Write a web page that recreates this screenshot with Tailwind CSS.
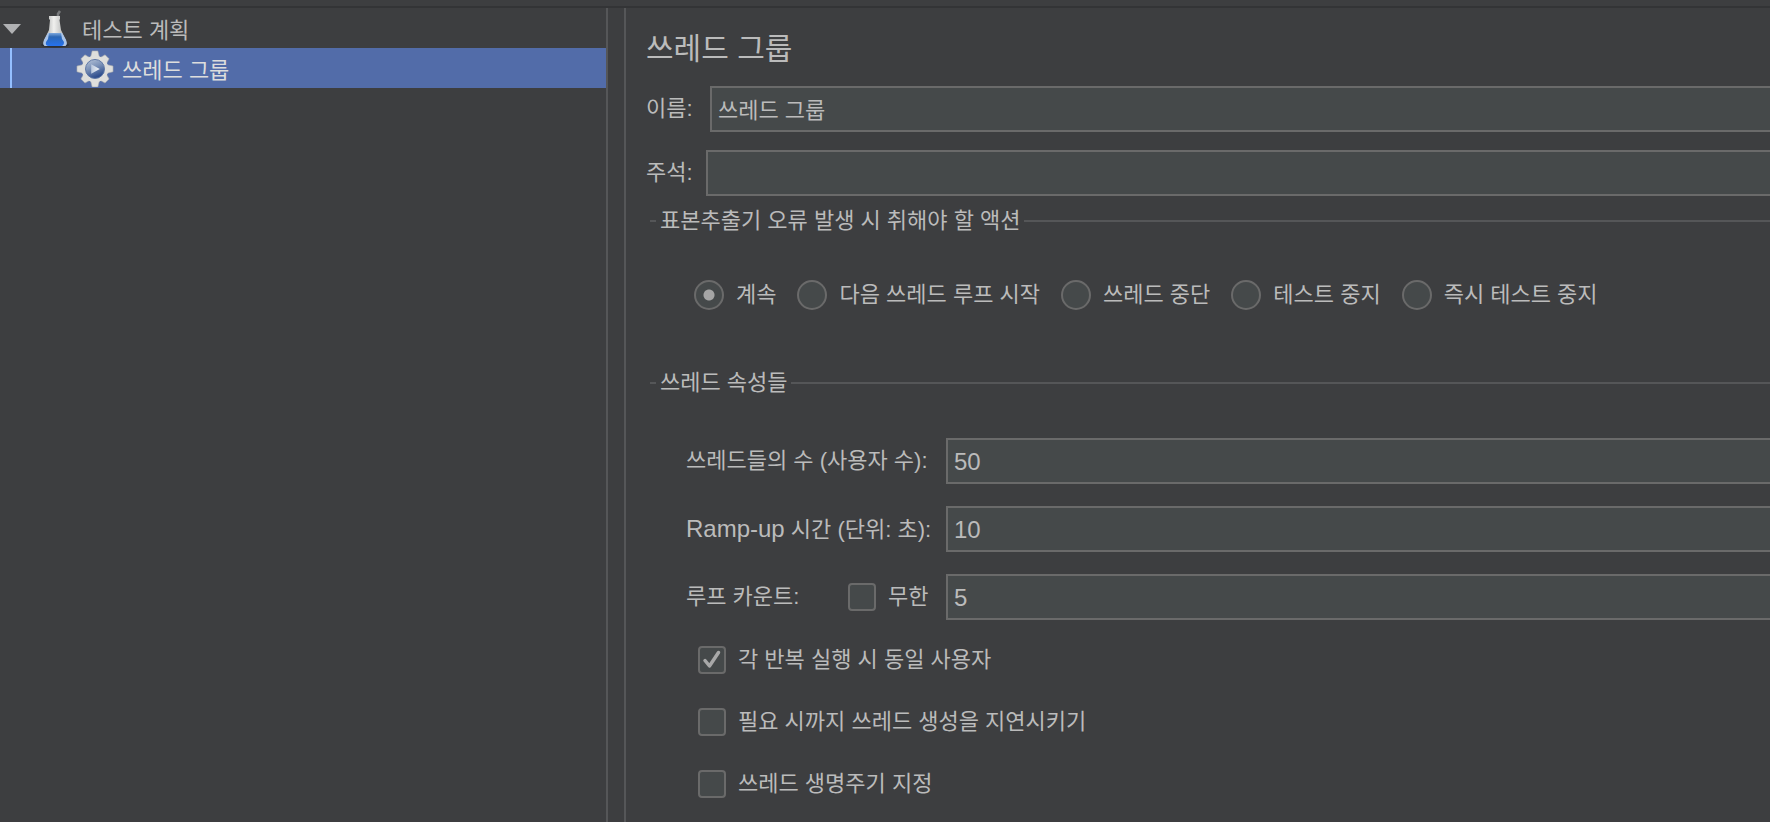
<!DOCTYPE html>
<html lang="ko">
<head>
    <meta charset="UTF-8">
    <meta name="viewport" content="width=device-width, initial-scale=1.0">
    <title>쓰레드 그룹</title>
    <script src="https://cdn.jsdelivr.net/npm/@tailwindcss/browser@4"></script>
</head>
<body class="flex flex-col min-h-screen overflow-x-hidden bg-[#3d3e40] text-[#bbbbbb] text-[22px] leading-8 font-['Liberation_Sans','Noto_Sans_CJK_KR',sans-serif]">
    <!-- Toolbar edge -->
    <header class="h-2 border-b-2 border-[#333436]"></header>

    <div class="flex-grow flex">
        <!-- Test plan tree -->
        <aside class="w-[608px] shrink-0 border-r-2 border-[#555658] font-['Noto_Sans_CJK_KR',sans-serif]">
            <ul>
                <li>
                    <div class="flex items-center h-10 pl-[3px]">
                        <svg class="w-[18px] h-3" viewBox="0 0 18 12"><path d="M0 2H18L9 12Z" fill="#b0b1b3"/></svg>
                        <svg class="w-7 h-10 ml-5" viewBox="0 0 28 40">
                            <defs>
                                <linearGradient id="glass" x1="0" x2="1" y1="0" y2="0">
                                    <stop offset="0" stop-color="#9c9f9f"/>
                                    <stop offset=".45" stop-color="#f0f0ee"/>
                                    <stop offset="1" stop-color="#a4a6a6"/>
                                </linearGradient>
                                <linearGradient id="liquid" x1="0" x2="0" y1="0" y2="1">
                                    <stop offset="0" stop-color="#7fa9dd"/>
                                    <stop offset=".3" stop-color="#2c67b4"/>
                                    <stop offset="1" stop-color="#2672ee"/>
                                </linearGradient>
                            </defs>
                            <ellipse cx="14" cy="37" rx="14" ry="2.500" fill="#2b2f38"/>
                            <path d="M17 10V6L19 3" fill="none" stroke="#77797b" stroke-width="2.500"/>
                            <path d="M8 8H19V11L18.500 12L20 22L25 32Q27 38 23 38H5Q1 38 3 32L8 22L9 12L8 11Z" fill="url(#glass)"/>
                            <path d="M7 25H21L25 32Q27 38 23 38H5Q1 38 3 32Z" fill="#a9c4ea"/>
                            <path d="M8 25H20L21 31L23 34Q23 38 20 38H8Q4 38 5 34L7 31Z" fill="url(#liquid)"/>
                        </svg>
                        <span class="ml-[13px]">테스트 계획</span>
                    </div>
                    <ul>
                        <li class="flex items-center h-10 bg-[#526ca9] text-[#dddddd]">
                            <span class="w-[2px] h-10 ml-[10px] bg-[#94bfff]"></span>
                            <svg class="w-[38px] h-[38px] ml-16" viewBox="-1 -2 40 40">
                                <defs>
                                    <linearGradient id="lens" x1="0" x2=".4" y1="0" y2="1">
                                        <stop offset="0" stop-color="#b9c6da"/>
                                        <stop offset=".5" stop-color="#7c92b8"/>
                                        <stop offset="1" stop-color="#2d4c8c"/>
                                    </linearGradient>
                                    <linearGradient id="play" x1="0" x2="1" y1="0" y2="0">
                                        <stop offset="0" stop-color="#b8c6dc"/>
                                        <stop offset="1" stop-color="#f4f6f8"/>
                                    </linearGradient>
                                </defs>
                                <g fill="#dededc" stroke="#a3a6aa" stroke-width=".6">
                                    <path d="M16 0H22L24 8V30L22 38H16L14 30V8Z"/>
                                    <path d="M16 1H22L24 8V30L22 37H16L14 30V8Z" transform="rotate(45 19 19)"/>
                                    <path d="M16 0H22L24 8V30L22 38H16L14 30V8Z" transform="rotate(90 19 19)"/>
                                    <path d="M16 1H22L24 8V30L22 37H16L14 30V8Z" transform="rotate(135 19 19)"/>
                                </g>
                                <circle cx="19" cy="19" r="14" fill="#dededc"/>
                                <circle cx="19" cy="19" r="10" fill="url(#lens)" stroke="#5b74a3" stroke-width="1"/>
                                <path d="M15 14L24 19L15 24Z" fill="url(#play)"/>
                            </svg>
                            <span class="ml-2">쓰레드 그룹</span>
                        </li>
                    </ul>
                </li>
            </ul>
        </aside>

        <!-- Thread group settings -->
        <main class="flex-grow ml-4 border-l-2 border-[#555658] pl-5">
            <h1 class="pt-[21px] text-[30px] leading-10">쓰레드 그룹</h1>

            <div class="flex items-center mt-[17px]">
                <label for="name" class="w-16">이름:</label>
                <input id="name" type="text" value="쓰레드 그룹" class="flex-grow h-[46px] px-[6px] pb-[2px] bg-[#45494a] border-2 border-r-0 border-[#6a6a6a]">
            </div>
            <div class="flex items-center mt-[18px]">
                <label for="comment" class="w-15">주석:</label>
                <input id="comment" type="text" class="flex-grow h-[46px] px-[6px] pb-[2px] bg-[#45494a] border-2 border-r-0 border-[#6a6a6a]">
            </div>

            <section>
                <h2 class="flex items-center mt-[9px] pl-1">
                    <span class="w-[6px] h-[2px] mr-[4px] bg-[#555658]"></span>
                    표본추출기 오류 발생 시 취해야 할 액션
                    <span class="flex-grow h-[2px] ml-[3px] bg-[#555658]"></span>
                </h2>
                <div class="flex items-center gap-[21px] mt-[42px] ml-12">
                    <label class="flex items-center gap-3"><input type="radio" name="on-error" checked class="appearance-none size-[30px] rounded-full bg-[#45494a] border-2 border-[#6a6a6a] checked:bg-[radial-gradient(circle,#a5a5a5_5px,#45494a_6px)]">계속</label>
                    <label class="flex items-center gap-3"><input type="radio" name="on-error" class="appearance-none size-[30px] rounded-full bg-[#45494a] border-2 border-[#6a6a6a] checked:bg-[radial-gradient(circle,#a5a5a5_5px,#45494a_6px)]">다음 쓰레드 루프 시작</label>
                    <label class="flex items-center gap-3"><input type="radio" name="on-error" class="appearance-none size-[30px] rounded-full bg-[#45494a] border-2 border-[#6a6a6a] checked:bg-[radial-gradient(circle,#a5a5a5_5px,#45494a_6px)]">쓰레드 중단</label>
                    <label class="flex items-center gap-3"><input type="radio" name="on-error" class="appearance-none size-[30px] rounded-full bg-[#45494a] border-2 border-[#6a6a6a] checked:bg-[radial-gradient(circle,#a5a5a5_5px,#45494a_6px)]">테스트 중지</label>
                    <label class="flex items-center gap-3"><input type="radio" name="on-error" class="appearance-none size-[30px] rounded-full bg-[#45494a] border-2 border-[#6a6a6a] checked:bg-[radial-gradient(circle,#a5a5a5_5px,#45494a_6px)]">즉시 테스트 중지</label>
                </div>
            </section>

            <section>
                <h2 class="flex items-center mt-14 pl-1">
                    <span class="w-[6px] h-[2px] mr-[4px] bg-[#555658]"></span>
                    쓰레드 속성들
                    <span class="flex-grow h-[2px] ml-[3px] bg-[#555658]"></span>
                </h2>
                <div class="flex flex-col gap-[22px] mt-[39px] ml-10">
                    <div class="flex items-center">
                        <label for="threads" class="w-[260px]">쓰레드들의 수 (사용자 수):</label>
                        <input id="threads" type="text" value="50" class="flex-grow h-[46px] px-[6px] pt-[2px] text-2xl bg-[#45494a] border-2 border-r-0 border-[#6a6a6a]">
                    </div>
                    <div class="flex items-center">
                        <label for="ramp-up" class="w-[260px]"><span class="text-2xl leading-8">Ramp-up</span> 시간 (단위: 초):</label>
                        <input id="ramp-up" type="text" value="10" class="flex-grow h-[46px] px-[6px] pt-[2px] text-2xl bg-[#45494a] border-2 border-r-0 border-[#6a6a6a]">
                    </div>
                    <div class="flex items-center">
                        <label for="loops" class="w-[162px]">루프 카운트:</label>
                        <label class="flex items-center gap-3 w-[98px]"><input type="checkbox" class="appearance-none size-7 rounded bg-[#45494a] border-2 border-[#6a6a6a]">무한</label>
                        <input id="loops" type="text" value="5" class="flex-grow h-[46px] px-[6px] pt-[2px] text-2xl bg-[#45494a] border-2 border-r-0 border-[#6a6a6a]">
                    </div>
                </div>
                <div class="flex flex-col items-start gap-[30px] mt-6 ml-[52px] pb-5">
                    <label class="flex items-center gap-3">
                        <span class="relative size-7">
                            <input type="checkbox" checked class="peer block appearance-none size-7 rounded bg-[#45494a] border-2 border-[#6a6a6a]">
                            <svg class="absolute inset-0 size-7 hidden peer-checked:block pointer-events-none" viewBox="0 0 28 28"><path d="M7 14.500L11.500 20L20.500 6.500" fill="none" stroke="#a8a8a8" stroke-width="3.500" stroke-linecap="round" stroke-linejoin="round"/></svg>
                        </span>
                        각 반복 실행 시 동일 사용자
                    </label>
                    <label class="flex items-center gap-3"><input type="checkbox" class="appearance-none size-7 rounded bg-[#45494a] border-2 border-[#6a6a6a]">필요 시까지 쓰레드 생성을 지연시키기</label>
                    <label class="flex items-center gap-3"><input type="checkbox" class="appearance-none size-7 rounded bg-[#45494a] border-2 border-[#6a6a6a]">쓰레드 생명주기 지정</label>
                </div>
            </section>
        </main>
    </div>
</body>
</html>
